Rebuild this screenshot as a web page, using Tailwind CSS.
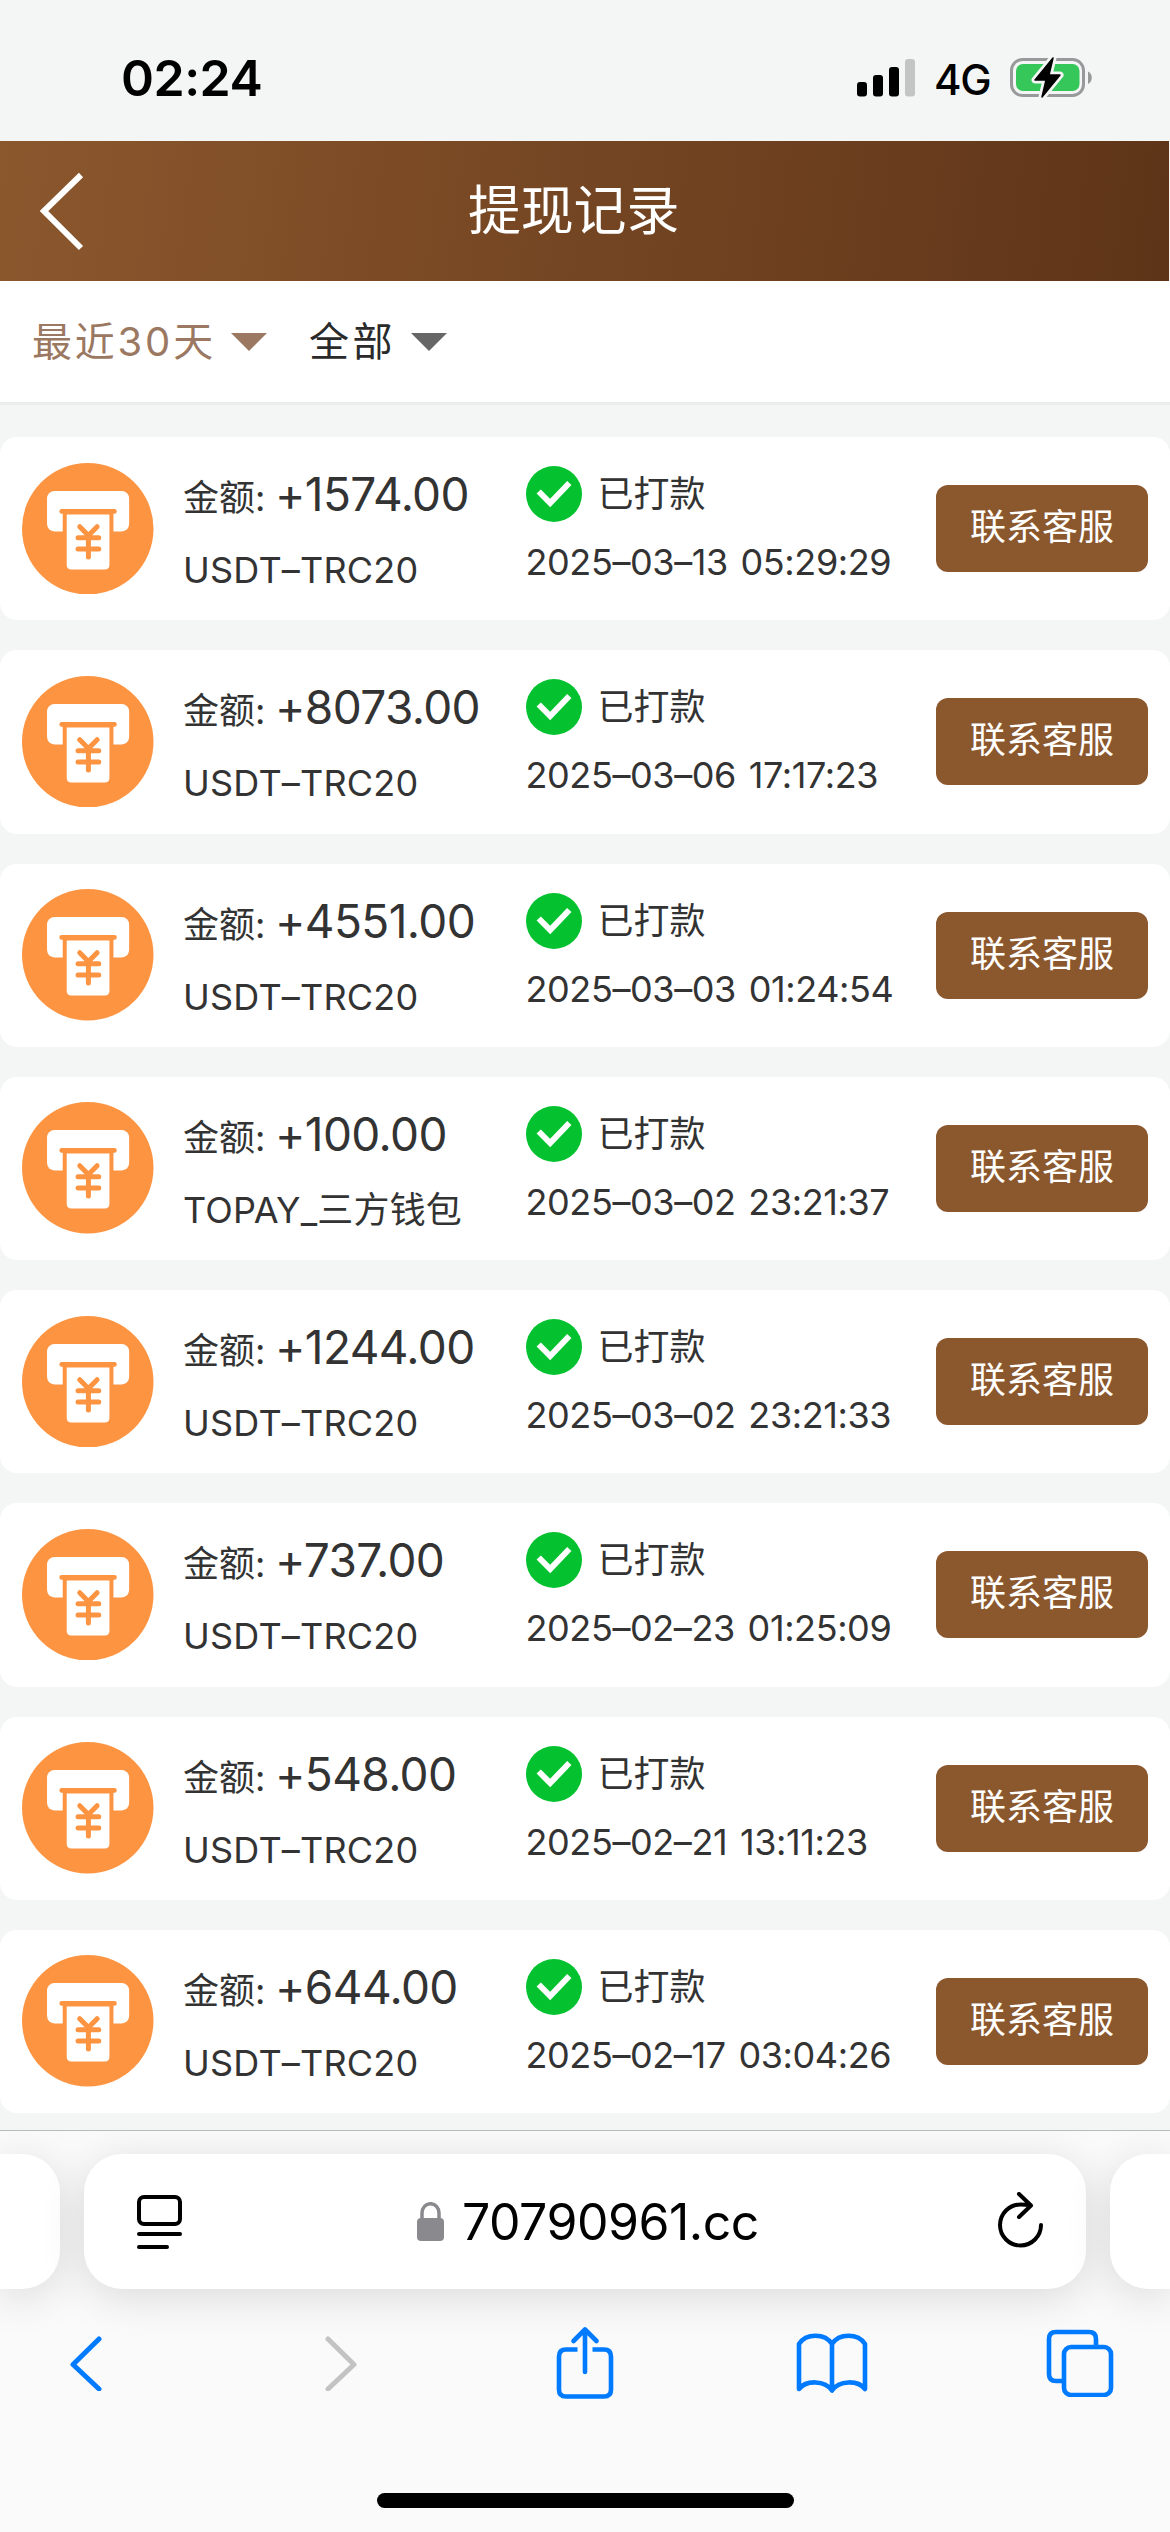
<!DOCTYPE html>
<html lang="zh-CN">
<head>
<meta charset="utf-8">
<title>提现记录</title>
<script src="https://cdn.jsdelivr.net/npm/@tailwindcss/browser@4"></script>
</head>
<body class="w-[1170px] h-[2532px] overflow-hidden bg-[#f4f6f5] font-['Inter','Noto_Sans_CJK_SC',sans-serif] text-[#333] flex flex-col">

<!-- Status bar -->
<div class="h-[141px] shrink-0 flex items-start justify-between pl-[121px] pr-[76px]">
  <div class="mt-[48px] text-[50px] leading-[60px] font-semibold text-black tracking-[-0.5px]">02:24</div>
  <div class="mt-[56px] h-[44px] flex items-start">
    <svg class="mt-[3px] w-[58px] h-[38px]" viewBox="0 0 58 38"><g fill="#000"><rect y="23" width="10" height="14.500" rx="3"/><rect x="16" y="16" width="10" height="21.500" rx="3"/><rect x="32" y="8" width="10" height="29.500" rx="3"/></g><rect x="48" width="10" height="37.500" rx="3" fill="#c3c5c4"/></svg>
    <div class="ml-[19px] w-[76px] mt-[-1px] text-[42px] leading-[50px] font-medium text-black tracking-[-1.2px]">4G</div>
    <svg class="w-[84px] h-[44px]" viewBox="0 0 84 44"><rect x="1.500" y="3.500" width="72" height="36" rx="11" fill="none" stroke="#97999a" stroke-width="3"/><path d="M78 15.500c5 2 5 10.500 0 12.500z" fill="#97999a"/><rect x="6" y="8" width="63.500" height="27" rx="7" fill="#35c759"/><path d="M43 2 25 24h11l-4 17 18-22H39z" fill="#000" stroke="#f4f6f5" stroke-width="7" stroke-linejoin="round"/><path d="M43 2 25 24h11l-4 17 18-22H39z" fill="#000" stroke="#000" stroke-width="1.500" stroke-linejoin="round"/></svg>
  </div>
</div>

<!-- Title bar -->
<header class="h-[140px] w-[1169px] shrink-0 bg-linear-[97deg] from-[#8b572d] to-[#5e3418] flex items-center">
  <svg class="ml-[38px] w-[48px] h-[84px]" viewBox="0 0 48 84"><path d="M43 6 6 42l37 37" fill="none" stroke="#fff" stroke-width="6"/></svg>
  <h1 class="ml-[382px] text-white text-[53px] leading-[70px] tracking-[-0.2px] mt-[-1px]">提现记录</h1>
</header>

<!-- Filters -->
<div class="h-[124px] shrink-0 bg-white border-b-3 border-[#ececec] flex items-center pl-[32px] text-[40px] leading-[50px] tracking-[2.8px]">
  <span class="w-[199px] text-[#9b7861] whitespace-nowrap">最近30天</span>
  <svg class="w-[36px] h-[18px]" viewBox="0 0 36 18"><path d="M0 0h36L18 18z" fill="#9b7861"/></svg>
  <span class="ml-[42px] w-[102px] text-[#2a2a2a] whitespace-nowrap tracking-[3.5px]">全部</span>
  <svg class="w-[36px] h-[18px]" viewBox="0 0 36 18"><path d="M0 0h36L18 18z" fill="#666"/></svg>
</div>

<!-- Records -->
<main id="list" class="flex flex-col gap-[30px] pt-[32px] h-[1725px] shrink-0 overflow-hidden"></main>

<!-- Browser chrome -->
<footer class="h-[402px] shrink-0 bg-[#fafafa] border-t border-[#b9bcbd] flex flex-col overflow-hidden">
  <div class="mt-[23px] flex gap-[24px] h-[135px] shrink-0">
    <div class="w-[60px] shrink-0 bg-white rounded-r-[38px] shadow-[0_8px_44px_rgba(0,0,0,0.13)]"></div>
    <div class="w-[1002px] shrink-0 bg-white rounded-[38px] shadow-[0_8px_44px_rgba(0,0,0,0.13)] flex items-center">
      <svg class="ml-[53px] w-[45px] h-[54px]" viewBox="0 0 45 54" fill="none" stroke="#000" stroke-width="4" stroke-linecap="round"><rect x="2" y="2" width="41" height="27" rx="5"/><path d="M2 39h41M2 52h28"/></svg>
      <svg class="ml-[235px] w-[27px] h-[39px]" viewBox="0 0 27 39"><rect y="16" width="27" height="23" rx="4" fill="#8a8a8e"/><path d="M5 18v-7a8.500 9.300 0 0 1 17 0v7" fill="none" stroke="#8a8a8e" stroke-width="3.500"/></svg>
      <div class="ml-[18px] w-[534px] text-[50px] leading-[60px] text-black tracking-[-0.5px]">70790961.cc</div>
      <svg class="w-[50px] h-[56px] mt-[-4px]" viewBox="0 0 50 56" fill="none" stroke="#000" stroke-width="4" stroke-linecap="round" stroke-linejoin="round"><path d="M45 33A20.500 20.500 0 1 1 24.500 12.500q5 0 10 .8M23 2l12 11.500L23 25"/></svg>
    </div>
    <div class="w-[60px] shrink-0 bg-white rounded-l-[38px] shadow-[0_8px_44px_rgba(0,0,0,0.13)]"></div>
  </div>
  <div class="mt-[36px] h-[76px] shrink-0 flex items-center pl-[69px]">
    <svg class="w-[34px] h-[56px]" viewBox="0 0 34 56" fill="none" stroke="#007aff" stroke-width="5" stroke-linecap="round" stroke-linejoin="round"><path d="M30 4 4 29.500 30 54"/></svg>
    <svg class="ml-[221px] w-[34px] h-[56px]" viewBox="0 0 34 56" fill="none" stroke="#c3c3c3" stroke-width="5" stroke-linecap="round" stroke-linejoin="round"><path d="m4 4 26 25.500L4 54"/></svg>
    <svg class="ml-[198px] w-[58px] h-[74px]" viewBox="0 0 58 74" fill="none" stroke="#007aff" stroke-width="4.600" stroke-linecap="round" stroke-linejoin="round"><path stroke-linecap="butt" d="M21.500 23.500H10Q3 23.500 3 30.500v33Q3 70.500 10 70.500h38q7 0 7-7v-33q0-7-7-7H36.500"/><path d="M29 46V4M17.500 15 29 3.500 40.500 15"/></svg>
    <svg class="ml-[182px] w-[72px] h-[62px]" viewBox="0 0 72 62" fill="none" stroke="#007aff" stroke-width="4.600" stroke-linecap="round" stroke-linejoin="round"><path d="M36 12C29 1 10 1 3 12v45c7-9 26-9 33 1.500C43 48 62 48 69 57V12C62 1 43 1 36 12zv46"/></svg>
    <svg class="ml-[178px] w-[68px] h-[68px]" viewBox="0 0 68 68" fill="none" stroke="#007aff" stroke-width="4.600"><rect x="18" y="18" width="47" height="48" rx="7"/><path d="M50 18v-8q0-7-7-7H10q-7 0-7 7v35q0 7 7 7h8"/></svg>
  </div>
  <div class="mt-[92px] mx-auto w-[417px] h-[15px] shrink-0 rounded-full bg-black"></div>
</footer>

<template id="row">
  <article class="h-[183.250px] shrink-0 bg-white rounded-[17px] flex items-start">
    <svg class="ml-[22px] mt-[25.500px] w-[131.500px] h-[131.500px] shrink-0" viewBox="0 0 394 394">
      <circle cx="197" cy="197" r="197" fill="#fd9442"/>
      <rect x="75" y="84" width="246" height="121" rx="22" fill="#fff"/>
      <path d="M122 145h152v62H122z" fill="#fd9442"/>
      <rect x="112" y="138" width="172" height="14" rx="7" fill="#fd9442"/>
      <path d="M134 154h128v151q0 14-14 14h-100q-14 0-14-14z" fill="#fff"/>
      <path d="m173 191 26 26 26-26M199 217v65M168 224h62M168 258h62" fill="none" stroke="#fd9442" stroke-width="15" stroke-linecap="round" stroke-linejoin="round"/>
    </svg>
    <div class="ml-[29.500px] w-[342.500px] mt-[27px] shrink-0">
      <div class="h-[60px] flex items-baseline whitespace-nowrap leading-[60px]"><span class="text-[36px] w-[92px]">金额:</span><span data-f="amount" class="text-[46px] tracking-[-0.6px]"></span></div>
      <div data-f="method" class="mt-[21px] h-[50px] leading-[50px] text-[36px] whitespace-nowrap tracking-[0.2px]"></div>
    </div>
    <div class="w-[410.500px] mt-[28px] shrink-0">
      <div class="h-[58px] flex items-center gap-[16px] text-[36px] leading-[50px]">
        <svg class="w-[56px] h-[56px]" viewBox="0 0 56 56"><circle cx="28" cy="28" r="28" fill="#04c22f"/><path d="M12.700 25.500 24.200 37 43.300 17" fill="none" stroke="#fff" stroke-width="6"/></svg>
        <span>已打款</span>
      </div>
      <div data-f="time" class="mt-[14px] leading-[50px] text-[36px] whitespace-nowrap tracking-[-0.4px] [word-spacing:3px]"></div>
    </div>
    <button class="mt-[48px] w-[212px] h-[87px] rounded-[12px] bg-[#8b572d] text-white text-[36px] leading-[50px] pb-[3px]">联系客服</button>
  </article>
</template>
<script>
const records = [
  ['+1574.00', 'USDT–TRC20', '2025–03–13 05:29:29'],
  ['+8073.00', 'USDT–TRC20', '2025–03–06 17:17:23'],
  ['+4551.00', 'USDT–TRC20', '2025–03–03 01:24:54'],
  ['+100.00', 'TOPAY_三方钱包', '2025–03–02 23:21:37'],
  ['+1244.00', 'USDT–TRC20', '2025–03–02 23:21:33'],
  ['+737.00', 'USDT–TRC20', '2025–02–23 01:25:09'],
  ['+548.00', 'USDT–TRC20', '2025–02–21 13:11:23'],
  ['+644.00', 'USDT–TRC20', '2025–02–17 03:04:26']
];
const list = document.getElementById('list');
const row = document.getElementById('row');
for (const [amount, method, time] of records) {
  const node = row.content.cloneNode(true);
  node.querySelector('[data-f=amount]').textContent = amount;
  node.querySelector('[data-f=method]').textContent = method;
  node.querySelector('[data-f=time]').textContent = time;
  list.appendChild(node);
}
</script>
</body>
</html>
